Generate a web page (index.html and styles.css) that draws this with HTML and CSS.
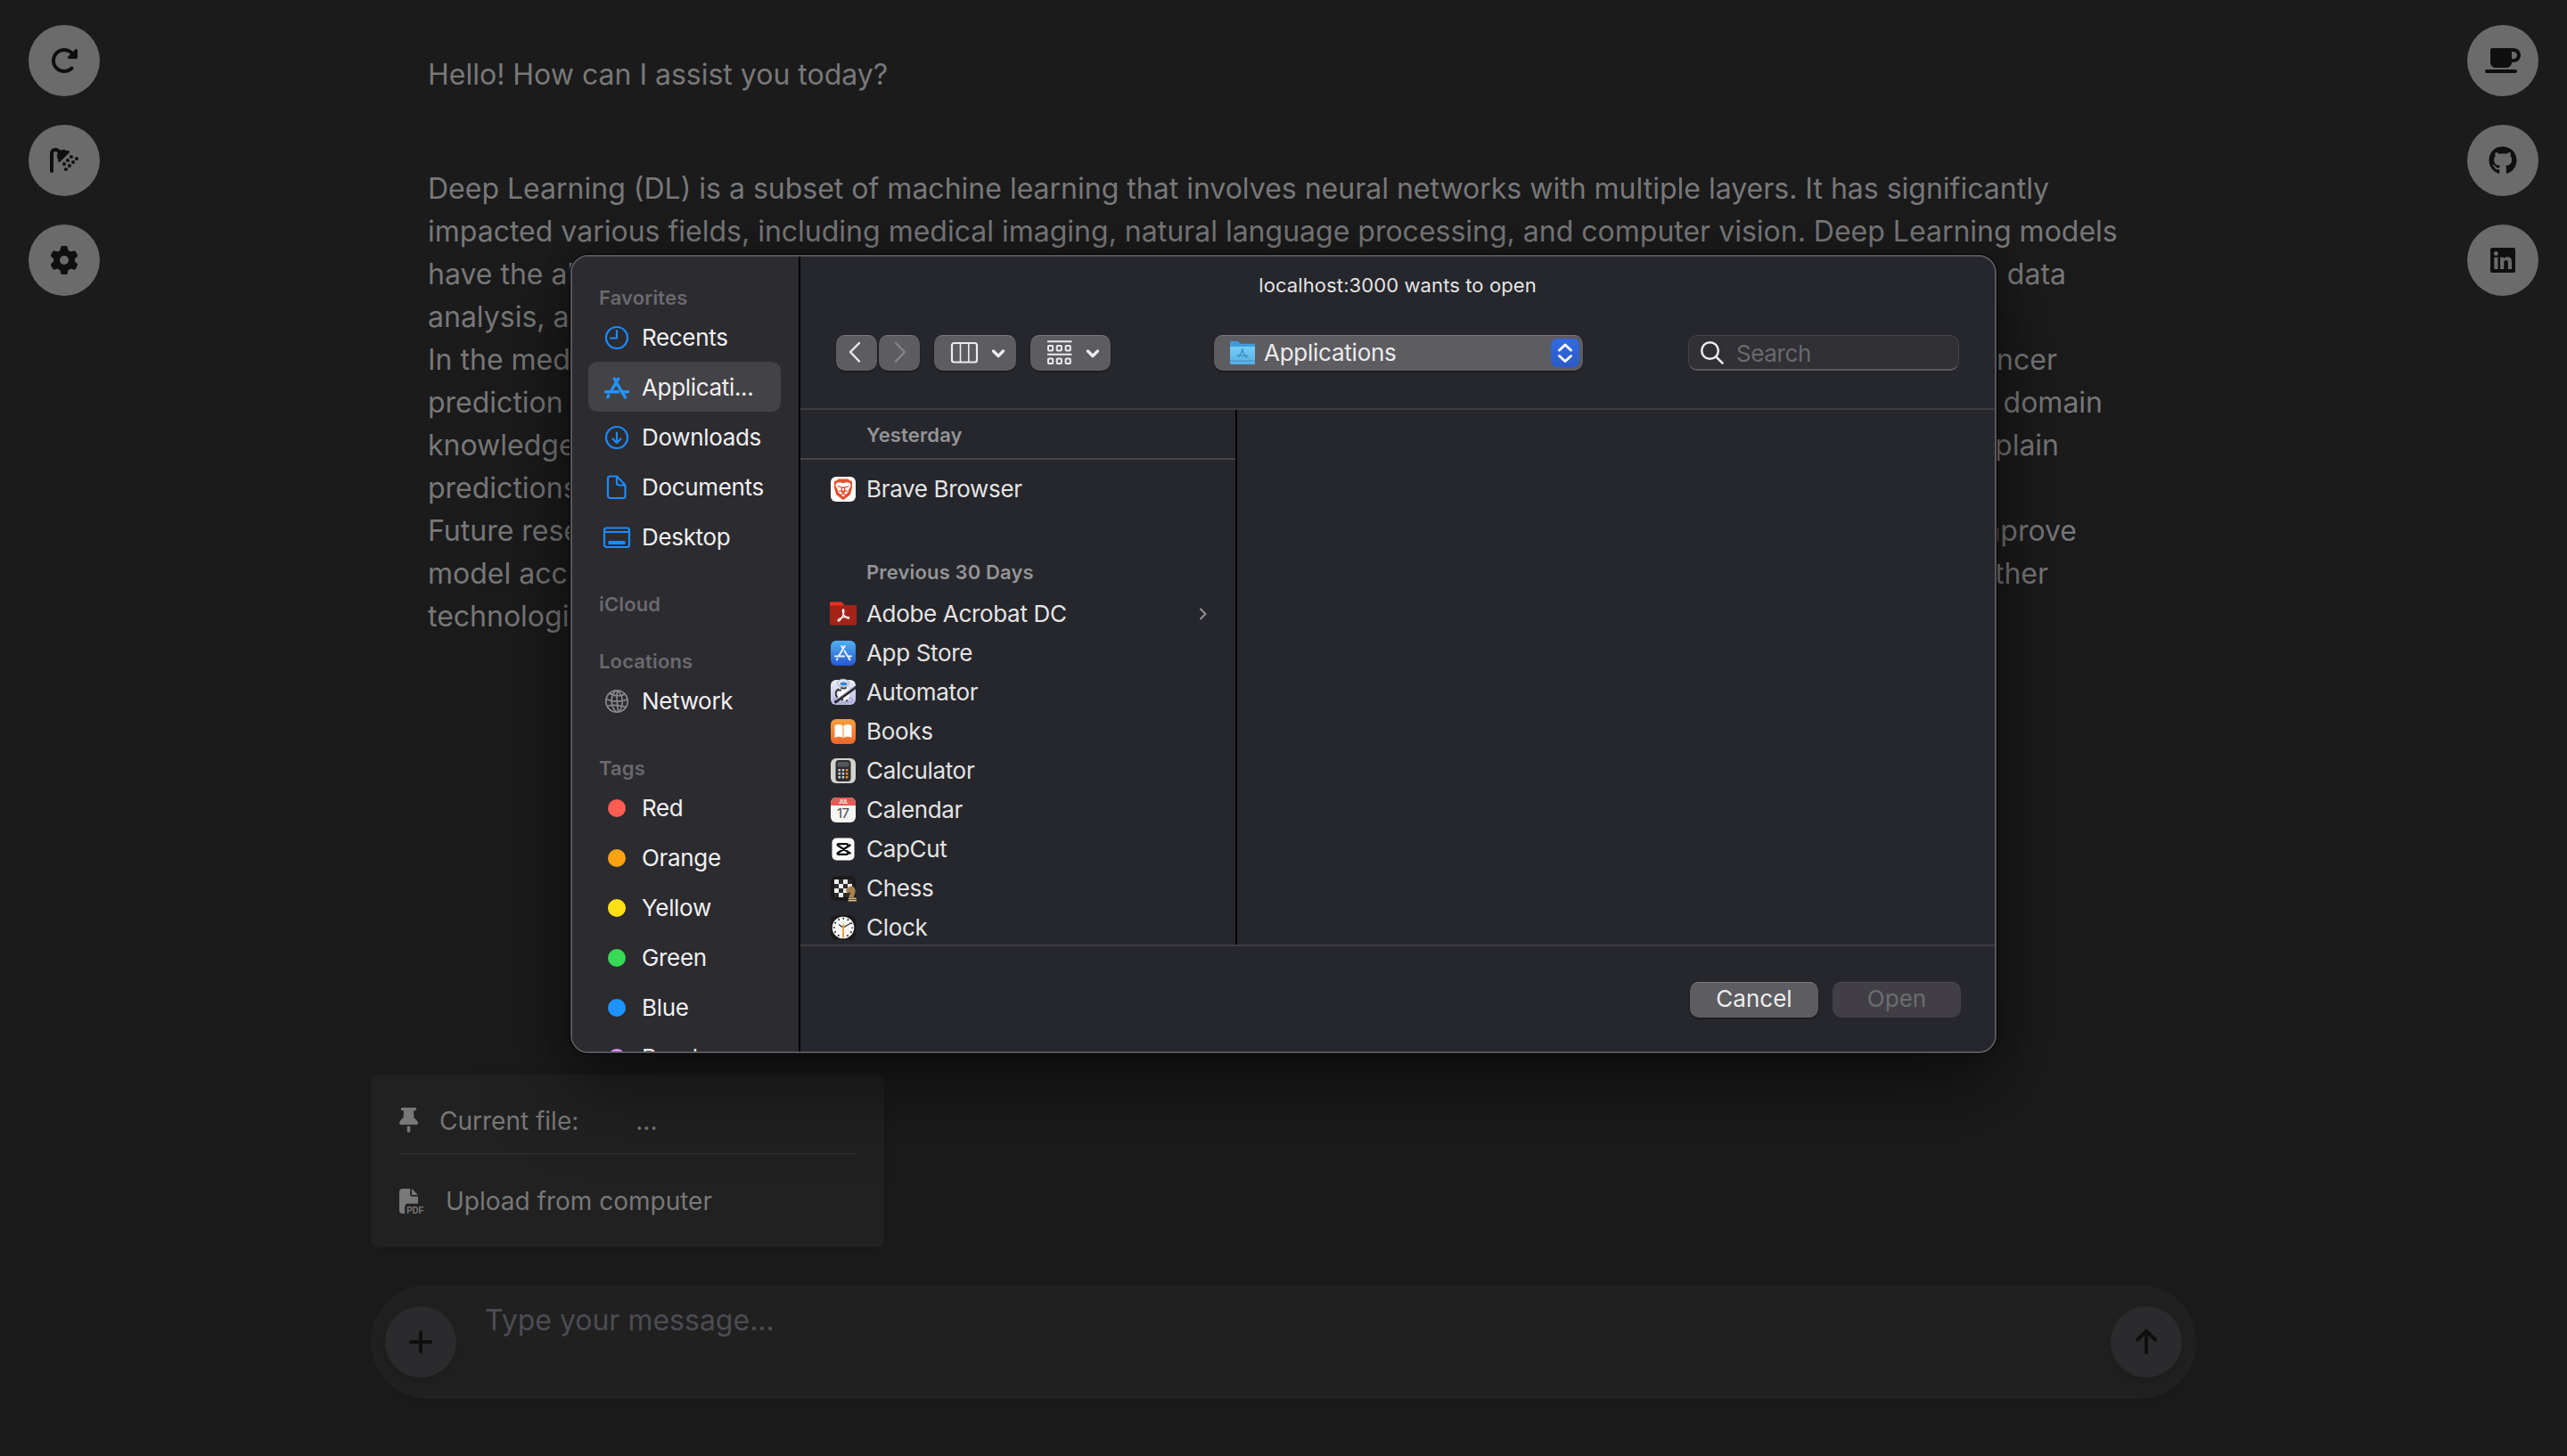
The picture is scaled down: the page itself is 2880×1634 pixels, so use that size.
FILE: index.html
```html
<!DOCTYPE html>
<html lang="en">
<head>
<meta charset="utf-8">
<title>Chat</title>
<link rel="stylesheet" href="styles.css">
</head>
<body>
<div class="page">
  <nav class="rail rail-left">
    <button class="round-btn" aria-label="Reload"><svg viewBox="0 0 512 512"><path d="M463.5 224H472c13.3 0 24-10.7 24-24V72c0-9.7-5.8-18.500-14.800-22.200s-19.300-1.700-26.200 5.200L413.400 96.600c-87.600-86.500-228.700-86.200-315.800 1c-87.500 87.500-87.500 229.300 0 316.800s229.300 87.500 316.800 0c12.500-12.500 12.500-32.800 0-45.300s-32.800-12.500-45.300 0c-62.500 62.500-163.800 62.500-226.300 0s-62.500-163.800 0-226.300c62.200-62.200 162.700-62.500 225.300-1L327 183c-6.900 6.900-8.900 17.200-5.200 26.200s12.500 14.800 22.200 14.800H463.500z"/></svg></button>
    <button class="round-btn" aria-label="Clear chat"><svg viewBox="0 0 512 512"><path d="M64 131.900C64 112.100 80.100 96 99.900 96c9.500 0 18.600 3.800 25.400 10.500l16.200 16.200c-21 38.900-17.400 87.500 10.900 123L151 247c-9.400 9.400-9.400 24.600 0 33.900s24.600 9.400 33.900 0L345 121c9.400-9.400 9.400-24.600 0-33.900s-24.600-9.400-33.900 0l-1.300 1.300c-35.500-28.300-84.200-31.900-123-10.900L170.500 61.300C151.800 42.500 126.400 32 99.900 32C44.700 32 0 76.700 0 131.900V448c0 17.700 14.300 32 32 32s32-14.300 32-32V131.900z"/><circle cx="256" cy="320" r="32"/><circle cx="288" cy="416" r="32"/><circle cx="320" cy="256" r="32"/><circle cx="352" cy="352" r="32"/><circle cx="384" cy="192" r="32"/><circle cx="416" cy="288" r="32"/><circle cx="480" cy="224" r="32"/></svg></button>
    <button class="round-btn" aria-label="Settings"><svg viewBox="0 0 512 512"><path d="M495.900 166.600c3.200 8.700 .5 18.400-6.400 24.600l-43.300 39.400c1.100 8.300 1.700 16.800 1.700 25.400s-.6 17.100-1.700 25.400l43.300 39.400c6.900 6.200 9.600 15.900 6.400 24.600c-4.400 11.900-9.700 23.300-15.800 34.300l-4.700 8.100c-6.600 11-14 21.400-22.100 31.200c-5.900 7.200-15.700 9.600-24.500 6.800l-55.700-17.700c-13.400 10.300-28.200 18.900-44 25.400l-12.500 57.100c-2 9.100-9 16.300-18.200 17.800c-13.800 2.300-28 3.500-42.500 3.500s-28.700-1.200-42.500-3.500c-9.200-1.500-16.200-8.700-18.200-17.800l-12.500-57.100c-15.800-6.500-30.600-15.100-44-25.400L83.100 425.900c-8.800 2.800-18.600 .3-24.500-6.800c-8.100-9.800-15.500-20.200-22.100-31.200l-4.700-8.100c-6.100-11-11.400-22.400-15.800-34.300c-3.200-8.700-.5-18.400 6.400-24.600l43.300-39.400C64.600 273.100 64 264.600 64 256s.6-17.100 1.700-25.400L22.400 191.200c-6.900-6.200-9.600-15.900-6.400-24.600c4.400-11.900 9.700-23.300 15.800-34.300l4.700-8.100c6.600-11 14-21.400 22.100-31.200c5.900-7.200 15.700-9.600 24.500-6.800l55.700 17.700c13.400-10.300 28.200-18.900 44-25.400l12.500-57.100c2-9.100 9-16.300 18.200-17.800C227.300 1.200 241.500 0 256 0s28.700 1.200 42.500 3.500c9.200 1.500 16.200 8.700 18.200 17.800l12.500 57.100c15.800 6.500 30.600 15.100 44 25.400l55.700-17.700c8.800-2.800 18.600-.3 24.500 6.800c8.100 9.800 15.500 20.200 22.100 31.200l4.700 8.100c6.100 11 11.400 22.400 15.800 34.300zM256 336a80 80 0 1 0 0-160 80 80 0 1 0 0 160z"/></svg></button>
  </nav>

  <main class="chat">
    <div class="messages">
      <p class="message">Hello! How can I assist you today?</p>
      <div class="message">
        <p>Deep Learning (DL) is a subset of machine learning that involves neural networks with multiple layers. It has significantly</p>
        <p>impacted various fields, including medical imaging, natural language processing, and computer vision. Deep Learning models</p>
        <p class="line" style="width:1838px"><span>have the ability</span><span>to learn from data</span></p>
        <p class="line" style="width:1838px"><span>analysis, and</span></p>
        <p class="line" style="width:1828px"><span>In the medical</span><span>cancer</span></p>
        <p class="line" style="width:1879px"><span>prediction and</span><span>and domain</span></p>
        <p class="line" style="width:1830px"><span>knowledge</span><span>explain</span></p>
        <p class="line" style="width:1830px"><span>predictions.</span></p>
        <p class="line" style="width:1850px"><span>Future research</span><span>improve</span></p>
        <p class="line" style="width:1818px"><span>model accuracy</span><span>other</span></p>
        <p class="line" style="width:1818px"><span>technologies.</span></p>
      </div>
    </div>

    <section class="file-card">
      <div class="file-row">
        <svg class="pin" viewBox="0 0 384 512"><path d="M32 32C32 14.300 46.300 0 64 0H320c17.700 0 32 14.300 32 32s-14.300 32-32 32H290.500l11.400 148.200c36.700 19.900 65.700 53.200 79.500 94.700l1 3c3.300 9.800 1.600 20.500-4.400 28.800s-15.700 13.300-26 13.300H32c-10.300 0-19.900-4.900-26-13.300s-7.700-19.100-4.400-28.800l1-3c13.800-41.500 42.800-74.800 79.500-94.700L93.500 64H64C46.300 64 32 49.700 32 32zM160 384h64v96c0 17.700-14.300 32-32 32s-32-14.300-32-32V384z"/></svg>
        <span>Current file:</span><span class="file-name">...</span>
      </div>
      <div class="file-row">
        <svg class="pdf" viewBox="0 0 512 512"><path d="M0 64C0 28.700 28.700 0 64 0H224V128c0 17.700 14.300 32 32 32H384V304H176c-35.300 0-64 28.700-64 64V512H64c-35.300 0-64-28.700-64-64V64zm384 64H256V0L384 128z"/><text x="150" y="512" textLength="350" lengthAdjust="spacingAndGlyphs">PDF</text></svg>
        <span>Upload from computer</span>
      </div>
    </section>

    <form class="composer">
      <button type="button" class="round-btn dim" aria-label="Add"><svg viewBox="0 0 32 32"><path class="line-icon" d="M16 5v22M5 16h22"/></svg></button>
      <div class="placeholder">Type your message...</div>
      <button type="button" class="round-btn dim" aria-label="Send"><svg viewBox="0 0 32 32"><path class="line-icon" d="M16 28V4M6 13.500 16 3.700 26 13.500"/></svg></button>
    </form>
  </main>

  <nav class="rail rail-right">
    <button class="round-btn" aria-label="Coffee"><svg class="wide" viewBox="0 0 640 512"><path d="M96 64c0-17.700 14.300-32 32-32H448h64c70.700 0 128 57.300 128 128s-57.300 128-128 128H480c0 53-43 96-96 96H192c-53 0-96-43-96-96V64zM480 224h32c35.300 0 64-28.700 64-64s-28.700-64-64-64H480V224zM32 416H544c17.700 0 32 14.300 32 32s-14.300 32-32 32H32c-17.700 0-32-14.300-32-32s14.300-32 32-32z"/></svg></button>
    <button class="round-btn" aria-label="GitHub"><svg viewBox="0 0 496 512"><path d="M165.900 397.400c0 2-2.300 3.600-5.200 3.600-3.300.3-5.600-1.300-5.600-3.600 0-2 2.300-3.600 5.200-3.600 3-.3 5.600 1.300 5.600 3.600zM244.800 8C106.100 8 0 113.300 0 252c0 110.900 69.800 205.800 169.500 239.200 12.800 2.300 17.300-5.600 17.300-12.100 0-6.200-.3-40.400-.3-61.400 0 0-70 15-84.700-29.800 0 0-11.400-29.100-27.800-36.600 0 0-22.900-15.700 1.600-15.400 0 0 24.900 2 38.600 25.800 21.900 38.600 58.600 27.500 72.900 20.900 2.300-16 8.800-27.100 16-33.700-55.900-6.200-112.300-14.300-112.300-110.500 0-27.500 7.600-41.300 23.600-58.900-2.600-6.500-11.100-33.300 2.600-67.900 20.900-6.500 69 27 69 27 20-5.600 41.500-8.500 62.800-8.500s42.800 2.900 62.800 8.500c0 0 48.100-33.600 69-27 13.700 34.700 5.200 61.400 2.600 67.900 16 17.700 25.800 31.500 25.800 58.900 0 96.500-58.900 104.200-114.800 110.500 9.200 7.900 17 22.900 17 46.400 0 33.700-.3 75.400-.3 83.600 0 6.500 4.600 14.400 17.300 12.100C428.200 457.800 496 362.900 496 252 496 113.300 383.500 8 244.800 8z"/></svg></button>
    <button class="round-btn" aria-label="LinkedIn"><svg viewBox="0 0 448 512"><path d="M416 32H31.900C14.300 32 0 46.500 0 64.300v383.400C0 465.500 14.300 480 31.900 480H416c17.600 0 32-14.500 32-32.300V64.300c0-17.800-14.400-32.300-32-32.300zM135.400 416H69V202.200h66.500V416zm-33.200-243c-21.300 0-38.500-17.300-38.500-38.500S80.900 96 102.200 96c21.200 0 38.500 17.300 38.500 38.500 0 21.300-17.200 38.500-38.500 38.500zm282.100 243h-66.400V312c0-24.800-.5-56.700-34.500-56.700-34.600 0-39.900 27-39.900 54.900V416h-66.400V202.200h63.700v29.200h.9c8.900-16.800 30.600-34.500 62.900-34.500 67.200 0 79.700 44.300 79.700 101.900V416z"/></svg></button>
  </nav>
</div>

<div class="dialog" role="dialog">
  <aside class="sidebar">
    <h2 class="side-title">Favorites</h2>
    <div class="side-item"><svg viewBox="0 0 32 32"><g class="blue-line"><circle cx="16" cy="16" r="12"/><path d="M16 8V16.500H9"/></g></svg><span>Recents</span></div>
    <div class="side-item selected"><svg viewBox="0 0 32 32"><g class="blue-line store"><path d="M17.700 6 9.800 19.500M13.300 6l1.500 2.500M16.200 11.500 25.500 27M3.600 20.800h14M22.800 20.800h5.700M6.800 24.900l-1 1.800"/></g></svg><span>Applicati...</span></div>
    <div class="side-item"><svg viewBox="0 0 32 32"><g class="blue-line"><circle cx="16" cy="16" r="12"/><path d="M16 10.500V21.500M11.500 17.500 16 22l4.500-4.500"/></g></svg><span>Downloads</span></div>
    <div class="side-item"><svg viewBox="0 0 32 32"><g class="blue-line"><path d="M8.500 3.500H16L25.500 13.500V25.500a2.500 2.500 0 0 1-2.500 2.500H8.500A2.500 2.500 0 0 1 6 25.500V6a2.500 2.500 0 0 1 2.500-2.500zM16 3.500V11a2.500 2.500 0 0 0 2.500 2.500H25.500"/></g></svg><span>Documents</span></div>
    <div class="side-item"><svg viewBox="0 0 32 32"><g class="blue-line"><rect x="2" y="5.500" width="28" height="21.500" rx="2.500"/><path d="M2 10h28"/></g><rect class="blue-fill" x="6.500" y="20" width="19" height="4" rx=".8"/></svg><span>Desktop</span></div>
    <h2 class="side-title">iCloud</h2>
    <h2 class="side-title">Locations</h2>
    <div class="side-item"><svg viewBox="0 0 32 32"><g class="grey-line"><circle cx="16" cy="16" r="12.200"/><path d="M14.500 4C8 12 9 22 15.500 28M17 4c6.500 6 7 17 1.500 24M16.500 4.500c-.8 8-.3 16 1.200 23M8 7c4 3.500 13 3.500 17 1M4 13.500c7 3.500 18 3.500 24.500 0M5 21.500c7-2 17-1 22 1.500M8.500 25.500"/></g></svg><span>Network</span></div>
    <h2 class="side-title">Tags</h2>
    <div class="side-item"><i class="dot red"></i><span>Red</span></div>
    <div class="side-item"><i class="dot orange"></i><span>Orange</span></div>
    <div class="side-item"><i class="dot yellow"></i><span>Yellow</span></div>
    <div class="side-item"><i class="dot green"></i><span>Green</span></div>
    <div class="side-item"><i class="dot azure"></i><span>Blue</span></div>
    <div class="side-item"><i class="dot purple"></i><span>Purple</span></div>
  </aside>

  <section class="panel">
    <header class="panel-head">
      <h1 class="panel-title">localhost:3000 wants to open</h1>
      <div class="toolbar">
        <button class="tool nav" aria-label="Back"><svg viewBox="0 0 46 40"><path d="M26 9 16 19l10 10.500" class="nav-line"/></svg></button>
        <button class="tool nav off" aria-label="Forward"><svg viewBox="0 0 46 40"><path d="M19 9 29 19 19 29.500" class="nav-line"/></svg></button>
        <button class="tool columns" aria-label="Column view"><svg viewBox="0 0 92 40"><g class="tool-line"><rect x="20" y="9" width="28" height="21.500" rx="2.500"/><path class="thin" d="M29.500 9v21.500M38.800 9v21.500"/></g><path class="chev" d="m66.500 18 5.500 5.500 5.500-5.500"/></svg></button>
        <button class="tool group" aria-label="Group"><svg viewBox="0 0 90 40"><g class="tool-line small"><path d="M19 7.200h27.500M19 21.800h27.500"/><rect x="20" y="12" width="5.200" height="5.500" rx="1"/><rect x="29.700" y="12" width="5.200" height="5.500" rx="1"/><rect x="39.600" y="12" width="5.200" height="5.500" rx="1"/><rect x="20" y="26.500" width="5.200" height="5.500" rx="1"/><rect x="29.700" y="26.500" width="5.200" height="5.500" rx="1"/><rect x="39.600" y="26.500" width="5.200" height="5.500" rx="1"/></g><path class="chev" d="m64.500 18 5.500 5.500 5.500-5.500"/></svg></button>
        <button class="tool location">
          <svg class="folder" viewBox="0 0 28 28"><defs><linearGradient id="fold" x1="0" y1="0" x2="0" y2="1"><stop offset="0" stop-color="#75cdf8"/><stop offset="1" stop-color="#55afe2"/></linearGradient></defs><path fill="#3d9ddb" d="M0 2.500A1.500 1.500 0 0 1 1.500 1h7c1.500 0 2 2.800 4 2.800h14A1.500 1.500 0 0 1 28 5.300V24H0z"/><path fill="url(#fold)" d="M0 7h28v18.500a1.500 1.500 0 0 1-1.500 1.500h-25A1.500 1.500 0 0 1 0 25.500z"/><path stroke="#3f8fc6" stroke-width="1" d="M0 23h28"/><g fill="none" stroke="#3689c4" stroke-width="1.200" stroke-linecap="round"><path d="M14.800 10 10 18M13 10l5.500 9.500M8 17.200h8M18.500 17.200H20"/></g></svg>
          <span>Applications</span>
          <svg class="stepper" viewBox="0 0 32 32"><path d="m9.500 13 6.500-6 6.500 6M9.500 19.500l6.500 6 6.500-6"/></svg>
        </button>
        <div class="search"><svg viewBox="0 0 28 28"><circle cx="11.500" cy="11.500" r="9.300"/><path d="M18.300 18.300 25.500 25.500"/></svg><span>Search</span></div>
      </div>
    </header>

    <div class="browser">
      <div class="files">
        <h3 class="group-title first">Yesterday</h3>
        <div class="file brave"><svg viewBox="0 0 30 30"><rect x="1" y="1" width="28" height="28" rx="6" fill="#fff"/><path fill="#e2502c" d="M9.500 3.500h11l2 2h2l.8 3-.7 1.500.7 2-2.300 9L15 27.200 7 21 4.700 12l.7-2-.7-1.500.8-3h2z"/><path fill="#fff" d="m7.500 8 4-.7 3.500 1 3.500-1 4 .7 1 3.500-2.300 3.700-.7 3.300-5.500 5-5.500-5-.7-3.300-2.300-3.700z"/><path fill="none" stroke="#de5130" stroke-width="1.300" d="m8.500 11.500 4.500 1.300 2 .2 2-.2 4.500-1.300M13.300 13v3.500l1.700 1 1.700-1V13M10 17.500l2.500-.8 2.500 3 2.500-3 2.500.8M15 17.500v3M12 21.500l3-1.500 3 1.500"/></svg><span>Brave Browser</span></div>
        <h3 class="group-title">Previous 30 Days</h3>
        <div class="file"><svg viewBox="0 0 30 30"><path fill="#e93323" d="M0 3A1.500 1.500 0 0 1 1.500 1.500h11c2 0 3 4 5 4H30V12H0z"/><path fill="#a32417" d="M0 5.500h28.500A1.500 1.500 0 0 1 30 7v19a1.500 1.500 0 0 1-1.500 1.500h-27A1.500 1.500 0 0 1 0 26z"/><path fill="none" stroke="#fff" stroke-width="1.300" d="M15 10c1.600 0 .9 4-.6 7.300-1.500 3.300-3.700 6.200-5 5.600-1.500-.8 2.100-3.400 5.400-4.200 3.400-.8 7-.6 6.800.8-.3 1.400-4-.3-5.900-3.400C14.200 13.700 13.800 10 15 10z"/></svg><span>Adobe Acrobat DC</span><svg class="more" viewBox="0 0 12 16"><path d="m3 2.500 5.500 5.500L3 13.500"/></svg></div>
        <div class="file"><svg viewBox="0 0 30 30"><defs><linearGradient id="as" x1="0" y1="0" x2="0" y2="1"><stop offset="0" stop-color="#4fb1f0"/><stop offset="1" stop-color="#2758d4"/></linearGradient></defs><rect x="1" y="1" width="28" height="28" rx="6" fill="url(#as)"/><path fill="none" stroke="#e9f3fd" stroke-width="2" stroke-linecap="round" d="M16.800 7 10 18.300M13.200 7l1 1.700M16.500 12.500l6 10M6 18.400h10.200M20.500 18.400H24M8.500 21.300l-.7 1.200"/></svg><span>App Store</span></div>
        <div class="file"><svg viewBox="0 0 30 30"><defs><linearGradient id="au" x1="0" y1="0" x2="0" y2="1"><stop offset="0" stop-color="#eeeefa"/><stop offset="1" stop-color="#b9b9e2"/></linearGradient></defs><rect x="1" y="1" width="28" height="28" rx="6" fill="url(#au)"/><ellipse cx="15" cy="23.500" rx="11" ry="3.500" fill="none" stroke="#9a9bc9"/><rect x="9" y="9.500" width="13" height="14.500" rx="5" fill="#f7f7f7"/><ellipse cx="15" cy="4.500" rx="6.500" ry="4.500" fill="#e3e5ea" stroke="#8b8d98" stroke-width=".7"/><ellipse cx="15.500" cy="5.500" rx="4" ry="1.900" fill="#2f86d8"/><path fill="none" stroke="#34343d" stroke-width="1.800" d="M10 11c-4 2.500-4.500 7-1.500 9.500M9 12.500h4M12.500 9.500c1.500 1.500 4.500 1.500 6 0M13 24l2-1.500M18 25l2-1"/><path stroke="#25252d" stroke-width="3" d="M5.500 26.500 29.500 9"/><path stroke="#9c9ca8" stroke-width=".7" d="M7 24 28 8.800"/></svg><span>Automator</span></div>
        <div class="file"><svg viewBox="0 0 30 30"><defs><linearGradient id="bk" x1="0" y1="0" x2="0" y2="1"><stop offset="0" stop-color="#f4a03d"/><stop offset="1" stop-color="#ec662c"/></linearGradient></defs><rect x="1" y="1" width="28" height="28" rx="6" fill="url(#bk)"/><path fill="#fff" d="M5.500 8.500C8 6.200 12.500 6.600 14.500 8.600V22c-2.500-1.700-6.500-1.800-9 0zM15.500 8.600c2-2 6.500-2.400 9-.1V22c-2.500-1.800-6.500-1.700-9 0z"/></svg><span>Books</span></div>
        <div class="file"><svg viewBox="0 0 30 30"><rect x="1" y="1" width="28" height="28" rx="6" fill="#d3d3cd"/><rect x="6.500" y="3" width="17" height="24" rx="3.500" fill="#2c2d30"/><rect x="8.500" y="5" width="13" height="5.500" rx="1.500" fill="#56585b"/><g fill="#cfcfcf"><rect x="9.500" y="13" width="2.500" height="2.500"/><rect x="13.700" y="13" width="2.500" height="2.500"/><rect x="9.500" y="17" width="2.500" height="2.500"/><rect x="13.700" y="17" width="2.500" height="2.500"/><rect x="9.500" y="21" width="2.500" height="2.500"/><rect x="13.700" y="21" width="2.500" height="2.500"/></g><g fill="#ee9130"><rect x="17.900" y="13" width="2.500" height="2.500"/><rect x="17.900" y="17" width="2.500" height="2.500"/><rect x="17.900" y="21" width="2.500" height="2.500"/></g></svg><span>Calculator</span></div>
        <div class="file"><svg viewBox="0 0 30 30"><rect x="1" y="1" width="28" height="28" rx="6" fill="#f5f5f4"/><path fill="#e25c54" d="M1 10V7a6 6 0 0 1 6-6h16a6 6 0 0 1 6 6v3z"/><text class="cal-month" x="15.200" y="8">JUL</text><text class="cal-day" x="14.800" y="24">17</text></svg><span>Calendar</span></div>
        <div class="file"><svg viewBox="0 0 30 30"><rect x="2.500" y="2.500" width="25" height="25" rx="5" fill="#fff"/><path fill="none" stroke="#0c0c0c" stroke-width="2.300" d="M23.500 10 10 18.500c-2 1.200-2 2.300 0 2.300h8.500c1.300 0 2-.8 2-2M23.500 20 10 11.500c-2-1.200-2-2.300 0-2.300h8.500c1.300 0 2 .8 2 2"/></svg><span>CapCut</span></div>
        <div class="file"><svg viewBox="0 0 30 30"><rect x="1" y="1" width="28" height="28" rx="6" fill="#1a1a1b"/><rect x="5" y="5" width="20" height="20" fill="#2b2b2b"/><path fill="#f1f1f1" d="M5 5h5v5H5zM15 5h5v5h-5zM10 10h5v5h-5zM20 10h5v5h-5zM5 15h5v5H5zM15 15h5v5h-5zM10 20h5v5h-5z"/><path fill="#a5834f" d="M18 18c1-4.500 5-6.500 8-5 3 2 3.500 6 1.500 9.500L27 25h-5.500c0-2.500 1.500-3.500 2-5.500l-4 .5z"/><path fill="#d8b98b" d="M21 25.500h8.500l.5 4h-9.500z"/><path stroke="#6c4d27" d="M21 27.500h9"/></svg><span>Chess</span></div>
        <div class="file"><svg viewBox="0 0 30 30"><rect x="1" y="1" width="28" height="28" rx="6" fill="#1a1a1b"/><circle cx="15" cy="15" r="12.300" fill="#f6f6f4"/><circle cx="15" cy="15" r="10.200" fill="none" stroke="#222" stroke-width="2" stroke-dasharray="1.600 3.741" stroke-dashoffset=".8"/><path fill="none" stroke="#333" stroke-width="1.300" d="M10 11.500 15 15l8.500-5"/><path stroke="#eda13b" stroke-width="2" d="M15 11.500V26"/></svg><span>Clock</span></div>
      </div>
      <div class="preview"></div>
    </div>

    <footer class="panel-foot">
      <button class="action">Cancel</button>
      <button class="action disabled">Open</button>
    </footer>
  </section>
</div>
</body>
</html>
```

FILE: styles.css
```css
* { box-sizing: border-box; }

body {
  margin: 0;
  background: #1b1b1c;
  font-family: Inter, "Liberation Sans", sans-serif;
  color: #787878;
  overflow: hidden;
}

h1, h2, h3, p { margin: 0; font-weight: 400; }
button { border: 0; padding: 0; font: inherit; color: inherit; }
svg { display: block; flex: none; overflow: visible; }

.page {
  display: flex;
  justify-content: space-between;
  height: 1634px;
  padding: 0 32px;
}

/* Side rails */
.rail {
  display: flex;
  flex-direction: column;
  gap: 32px;
  padding-top: 28px;
}
.round-btn {
  display: flex;
  flex: none;
  align-items: center;
  justify-content: center;
  width: 80px;
  height: 80px;
  border-radius: 50%;
  background: #6b6b6b;
}
.round-btn svg { width: 32px; height: 32px; fill: #0f0f0f; }
.round-btn .wide { width: 40px; }
.round-btn.dim { background: #2b2b2d; box-shadow: 0 4px 12px rgba(0, 0, 0, .12); }
.line-icon {
  fill: none;
  stroke: #0f0f0f;
  stroke-width: 4;
  stroke-linecap: round;
  stroke-linejoin: round;
}

/* Conversation */
.chat {
  display: flex;
  flex-direction: column;
  width: 2048px;
  padding-bottom: 64px;
}
.messages {
  flex: 1;
  display: flex;
  flex-direction: column;
  gap: 80px;
  padding: 60px 64px 0;
  font-size: 32px;
  line-height: 48px;
  white-space: nowrap;
}
.line { display: flex; justify-content: space-between; }

.file-card {
  width: 576px;
  height: 194px;
  margin-bottom: 42px;
  padding: 0 32px;
  border-radius: 8px;
  background: #212121;
  font-size: 28px;
  box-shadow: 0 4px 14px rgba(0, 0, 0, .12);
}
.file-row { display: flex; align-items: center; height: 90px; padding-top: 14px; }
.file-row:first-child { border-bottom: 2px solid #2c2c2c; }
.file-row:first-child span { padding-top: 2px; }
.file-row svg { height: 28px; fill: #787878; }
.pin { width: 21px; margin-right: 24px; }
.pdf { width: 28px; margin-right: 24px; }
.pdf text { font: 700 200px "Liberation Sans", sans-serif; }
.file-name { margin-left: 64px; }

.composer {
  display: flex;
  align-items: center;
  height: 128px;
  padding: 0 16px;
  border-radius: 64px;
  background: #202020;
  box-shadow: 0 8px 30px rgba(0, 0, 0, .08);
}
.placeholder {
  flex: 1;
  align-self: flex-start;
  padding: 16px 0 0 32px;
  font-size: 32px;
  line-height: 48px;
  color: #4c4c53;
}

/* File picker, floats over the page */
.dialog {
  position: absolute;
  left: 640px;
  top: 286px;
  display: flex;
  width: 1600px;
  height: 896px;
  border: 2px solid #57575b;
  border-radius: 20px;
  overflow: hidden;
  background: #26272c;
  box-shadow: 0 0 0 1px #000, 0 36px 90px rgba(0, 0, 0, .5), 0 0 30px rgba(0, 0, 0, .2);
  font-size: 26px;
  letter-spacing: -.33px;
  color: #e4e4e4;
}

.sidebar {
  width: 256px;
  flex: none;
  padding: 30px 20px 0 18px;
  border-right: 2px solid #000;
  background: #2c2b30;
  overflow: hidden;
}
.side-title {
  height: 32px;
  padding-left: 12px;
  font-size: 22px;
  line-height: 32px;
  font-weight: 600;
  letter-spacing: .15px;
  color: #6a696e;
}
.side-item + .side-title, .side-title + .side-title { margin-top: 32px; }
.side-item {
  display: flex;
  align-items: center;
  height: 56px;
  padding: 2px 0 0 16px;
  border-radius: 10px;
  line-height: 54px;
  color: #f0f0f0;
}
.side-item.selected { background: #434246; }
.side-item svg { width: 32px; height: 32px; margin-right: 12px; }
.blue-line { fill: none; stroke: #1a8cff; stroke-width: 2.200; stroke-linecap: round; stroke-linejoin: round; }
.blue-line.store { stroke: #2293ff; stroke-width: 3.400; }
.blue-fill { fill: #1a8cff; }
.grey-line { fill: none; stroke: #88888c; stroke-width: 1.700; }
.dot { width: 20px; height: 20px; margin: 0 18px 0 6px; border-radius: 50%; }
.red { background: #ff5c54; }
.orange { background: #fca311; }
.yellow { background: #ffe014; }
.green { background: #38d955; }
.azure { background: #1e93ff; }
.purple { background: #da8fff; }

.panel { flex: 1; display: flex; flex-direction: column; min-width: 0; }
.panel-head { height: 172px; border-bottom: 2px solid #3c3c41; }
.panel-title {
  padding-top: 16px;
  text-align: center;
  font-size: 22px;
  line-height: 32px;
  letter-spacing: .1px;
}
.toolbar {
  display: flex;
  align-items: center;
  margin-top: 40px;
  padding-left: 40px;
}
.tool {
  display: flex;
  align-items: center;
  height: 40px;
  border-radius: 10px;
  background: #5d5c61;
  box-shadow: inset 0 2px 0 -1px #7b7a7e, 0 1px 2px rgba(0, 0, 0, .5);
}
.tool svg { height: 40px; }
.nav { width: 46px; margin-right: 2px; }
.nav svg { width: 46px; }
.columns { width: 92px; margin-left: 14px; }
.columns svg { width: 92px; }
.group { width: 90px; margin-left: 16px; }
.group svg { width: 90px; }
.nav-line { fill: none; stroke: #ececec; stroke-width: 2.400; stroke-linecap: round; stroke-linejoin: round; }
.off .nav-line { stroke: #858488; }
.tool-line { fill: none; stroke: #ececec; stroke-width: 2.200; }
.tool-line .thin { stroke-width: 1.600; }
.tool-line.small { stroke-width: 2; }
.chev { fill: none; stroke: #ececec; stroke-width: 3.400; stroke-linecap: round; stroke-linejoin: round; }

.location { width: 414px; margin-left: 116px; padding: 0 4px 0 18px; letter-spacing: -.25px; color: #ececec; }
.location .folder { width: 28px; height: 28px; margin-right: 10px; }
.location span { flex: 1; padding-bottom: 2px; text-align: left; }
.location .stepper {
  width: 32px;
  height: 32px;
  border-radius: 7px;
  background: linear-gradient(#326be2, #2a5ac4);
  fill: none;
  stroke: #fff;
  stroke-width: 3;
  stroke-linecap: round;
  stroke-linejoin: round;
}
.search {
  display: flex;
  align-items: center;
  width: 304px;
  height: 40px;
  margin-left: 118px;
  padding-left: 12px;
  border: 1px solid #434348;
  border-bottom: 2px solid #5a5a5e;
  border-radius: 10px;
  background: #303035;
  color: #6a696e;
  letter-spacing: -.4px;
}
.search svg { width: 28px; height: 28px; margin-right: 13px; fill: none; stroke: #ececec; stroke-width: 2.500; stroke-linecap: round; }
.search span { padding-top: 2px; }

.browser { display: flex; height: 600px; overflow: hidden; }
.files { width: 490px; border-right: 2px solid #000; }
.preview { flex: 1; }
.group-title {
  height: 49px;
  margin-top: 47px;
  padding-left: 74px;
  font-size: 22px;
  line-height: 49px;
  font-weight: 600;
  letter-spacing: .15px;
  color: #949497;
}
.group-title.first { height: 56px; margin: 0; line-height: 56px; border-bottom: 2px solid #46464a; }
.file {
  display: flex;
  align-items: center;
  height: 44px;
  padding: 0 30px 0 33px;
  line-height: 44px;
  white-space: nowrap;
}
.file.brave { margin-top: 11px; }
.file svg { width: 30px; height: 30px; margin-right: 11px; }
.file span { flex: 1; }
.file .more { width: 12px; height: 16px; margin: 0; fill: none; stroke: #929296; stroke-width: 2; stroke-linecap: round; stroke-linejoin: round; }
.cal-month { font: 700 5.500px Inter, sans-serif; fill: #fff; text-anchor: middle; letter-spacing: 0; }
.cal-day { font: 400 15px Inter, sans-serif; fill: #4a4a4a; text-anchor: middle; letter-spacing: -.5px; }

.panel-foot {
  display: flex;
  justify-content: flex-end;
  gap: 16px;
  flex: 1;
  padding: 40px 38px 0 0;
  border-top: 2px solid #3c3c41;
}
.action {
  width: 144px;
  height: 40px;
  border-radius: 10px;
  background: #5d5c61;
  box-shadow: inset 0 2px 0 -1px #7b7a7e, 0 1px 2px rgba(0, 0, 0, .5);
  line-height: 38px;
  padding-bottom: 2px;
  color: #ededed;
}
.action.disabled { background: #413f45; color: #6d6c70; box-shadow: inset 0 2px 0 -1px #4e4d52; }
```
